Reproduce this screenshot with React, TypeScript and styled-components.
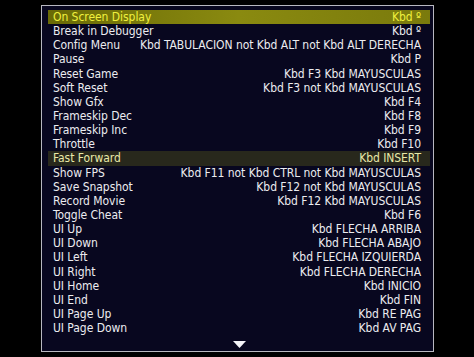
import styled, { createGlobalStyle } from "styled-components";

const GlobalStyle = createGlobalStyle`
  html, body {
    margin: 0;
    padding: 0;
    background: #000;
  }
  body {
    font-family: "DejaVu Sans Condensed", "DejaVu Sans", "Liberation Sans", sans-serif;
    font-stretch: condensed;
  }
`;

type Item = {
  label: string;
  input: string;
  state?: "selected" | "hover";
};

const items: Item[] = [
  { label: "On Screen Display", input: "Kbd º", state: "selected" },
  { label: "Break in Debugger", input: "Kbd º" },
  { label: "Config Menu", input: "Kbd TABULACION not Kbd ALT not Kbd ALT DERECHA" },
  { label: "Pause", input: "Kbd P" },
  { label: "Reset Game", input: "Kbd F3 Kbd MAYUSCULAS" },
  { label: "Soft Reset", input: "Kbd F3 not Kbd MAYUSCULAS" },
  { label: "Show Gfx", input: "Kbd F4" },
  { label: "Frameskip Dec", input: "Kbd F8" },
  { label: "Frameskip Inc", input: "Kbd F9" },
  { label: "Throttle", input: "Kbd F10" },
  { label: "Fast Forward", input: "Kbd INSERT", state: "hover" },
  { label: "Show FPS", input: "Kbd F11 not Kbd CTRL not Kbd MAYUSCULAS" },
  { label: "Save Snapshot", input: "Kbd F12 not Kbd MAYUSCULAS" },
  { label: "Record Movie", input: "Kbd F12 Kbd MAYUSCULAS" },
  { label: "Toggle Cheat", input: "Kbd F6" },
  { label: "UI Up", input: "Kbd FLECHA ARRIBA" },
  { label: "UI Down", input: "Kbd FLECHA ABAJO" },
  { label: "UI Left", input: "Kbd FLECHA IZQUIERDA" },
  { label: "UI Right", input: "Kbd FLECHA DERECHA" },
  { label: "UI Home", input: "Kbd INICIO" },
  { label: "UI End", input: "Kbd FIN" },
  { label: "UI Page Up", input: "Kbd RE PAG" },
  { label: "UI Page Down", input: "Kbd AV PAG" },
];

const Screen = styled.div`
  width: 474px;
  height: 357px;
  background: #000;
  padding: 5px 0 0 41px;
  box-sizing: border-box;
`;

const Panel = styled.div`
  width: 393px;
  height: 347px;
  box-sizing: border-box;
  border: 1px solid #b8b8c0;
  background: #08071f;
  padding: 4px 3px 0 6px;
  display: flex;
  flex-direction: column;
`;

const List = styled.div`
  display: flex;
  flex-direction: column;
  flex: 1;
`;

const Row = styled.div<{ $state?: "selected" | "hover" }>`
  height: 14.15px;
  display: flex;
  align-items: center;
  justify-content: space-between;
  padding: 0 9px 0 5px;
  font-size: 12px;
  letter-spacing: -0.05px;
  white-space: nowrap;
  color: ${(p) =>
    p.$state === "selected" ? "#f0f03e" : p.$state === "hover" ? "#e8e8a8" : "#ececf0"};
  background: ${(p) =>
    p.$state === "selected"
      ? "linear-gradient(90deg, #6a6a06 0%, #8a8a10 50%, #7a7a0c 100%)"
      : p.$state === "hover"
      ? "#28281c"
      : "transparent"};
`;

const Footer = styled.div`
  height: 28px;
  display: flex;
  justify-content: center;
  align-items: flex-start;
  padding-top: 6px;
  box-sizing: border-box;
`;

export default function App() {
  return (
    <>
      <GlobalStyle />
      <Screen>
        <Panel>
          <List>
            {items.map((it) => (
              <Row key={it.label} $state={it.state}>
                <span>{it.label}</span>
                <span>{it.input}</span>
              </Row>
            ))}
          </List>
          <Footer>
            <svg width="13" height="7" viewBox="0 0 13 7">
              <polygon points="0,0 13,0 6.5,7" fill="#f4f4f8" />
            </svg>
          </Footer>
        </Panel>
      </Screen>
    </>
  );
}
